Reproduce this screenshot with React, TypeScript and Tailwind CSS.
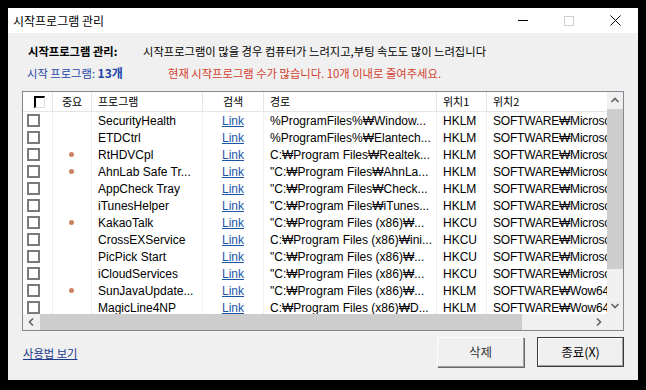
import React from "react";

const KR = { fontFamily: '"Noto Sans CJK KR", "Noto Sans", sans-serif' };
const TB = { fontFamily: '"Liberation Sans", "Noto Sans CJK KR", sans-serif' };

type Row = { name: string; dot: boolean; path: string; l1: string; l2: string };
const rows: Row[] = [
  { name: "SecurityHealth", dot: false, path: "%ProgramFiles%₩Window...", l1: "HKLM", l2: "SOFTWARE₩Microsoft₩Windows" },
  { name: "ETDCtrl", dot: false, path: "%ProgramFiles%₩Elantech...", l1: "HKLM", l2: "SOFTWARE₩Microsoft₩Windows" },
  { name: "RtHDVCpl", dot: true, path: "C:₩Program Files₩Realtek...", l1: "HKLM", l2: "SOFTWARE₩Microsoft₩Windows" },
  { name: "AhnLab Safe Tr...", dot: true, path: "\"C:₩Program Files₩AhnLa...", l1: "HKLM", l2: "SOFTWARE₩Microsoft₩Windows" },
  { name: "AppCheck Tray", dot: false, path: "\"C:₩Program Files₩Check...", l1: "HKLM", l2: "SOFTWARE₩Microsoft₩Windows" },
  { name: "iTunesHelper", dot: false, path: "\"C:₩Program Files₩iTunes...", l1: "HKLM", l2: "SOFTWARE₩Microsoft₩Windows" },
  { name: "KakaoTalk", dot: true, path: "\"C:₩Program Files (x86)₩...", l1: "HKCU", l2: "SOFTWARE₩Microsoft₩Windows" },
  { name: "CrossEXService", dot: false, path: "C:₩Program Files (x86)₩ini...", l1: "HKCU", l2: "SOFTWARE₩Microsoft₩Windows" },
  { name: "PicPick Start", dot: false, path: "\"C:₩Program Files (x86)₩...", l1: "HKCU", l2: "SOFTWARE₩Microsoft₩Windows" },
  { name: "iCloudServices", dot: false, path: "\"C:₩Program Files (x86)₩...", l1: "HKCU", l2: "SOFTWARE₩Microsoft₩Windows" },
  { name: "SunJavaUpdate...", dot: true, path: "\"C:₩Program Files (x86)₩...", l1: "HKLM", l2: "SOFTWARE₩Wow6432Node₩Microsoft" },
  { name: "MagicLine4NP", dot: false, path: "C:₩Program Files (x86)₩D...", l1: "HKLM", l2: "SOFTWARE₩Wow6432Node₩Microsoft" },
];

function Chevron({ dir }: { dir: "up" | "down" | "left" | "right" }) {
  const d =
    dir === "up"
      ? "M1.5 6 L5 2.5 L8.5 6"
      : dir === "down"
      ? "M1.5 3 L5 6.5 L8.5 3"
      : dir === "left"
      ? "M6 1.5 L2.5 5 L6 8.5"
      : "M3 1.5 L6.5 5 L3 8.5";
  return (
    <svg width="10" height="10" viewBox="0 0 10 10">
      <path d={d} fill="none" stroke="#606060" strokeWidth="1.6" />
    </svg>
  );
}

export default function App() {
  return (
    <div className="w-[646px] h-[390px] bg-black pt-[8px] pl-[8px] overflow-hidden">
      <div className="w-[630px] h-[372px] bg-[#f0f0f0] flex flex-col">
        {/* title bar */}
        <div className="h-[25px] bg-white flex items-center shrink-0">
          <span className="pl-[5px] text-[12px] text-black" style={KR}>
            시작프로그램 관리
          </span>
          <div className="ml-auto flex h-full">
            <div className="w-[46px] h-full flex items-center justify-center">
              <div className="w-[10px] h-px bg-black" />
            </div>
            <div className="w-[46px] h-full flex items-center justify-center">
              <div className="w-[10px] h-[10px] border border-[#cfcfcf]" />
            </div>
            <div className="w-[46px] h-full flex items-center justify-center">
              <svg width="11" height="11" viewBox="0 0 11 11">
                <path d="M0.5 0.5 L10.5 10.5 M10.5 0.5 L0.5 10.5" stroke="#000" strokeWidth="1" />
              </svg>
            </div>
          </div>
        </div>

        {/* body */}
        <div className="flex-1 px-[14px] flex flex-col">
          <div className="pt-[10px] flex flex-col text-[11.3px]" style={KR}>
            <div className="h-[16px] flex items-center">
              <span className="pl-[6px] w-[121px] font-bold text-black">시작프로그램 관리:</span>
              <span className="text-black">시작프로그램이 많을 경우 컴퓨터가 느려지고,부팅 속도도 많이 느려집니다</span>
            </div>
            <div className="h-[16px] mt-[6px] flex items-center">
              <span className="pl-[5px] w-[146px] text-[#1f45a8]">
                시작 프로그램: <span className="font-bold text-[12px]">13개</span>
              </span>
              <span className="text-[#d2402e]">현재 시작프로그램 수가 많습니다. 10개 이내로 줄여주세요.</span>
            </div>
          </div>

          {/* list view */}
          <div className="mt-[10px] h-[240px] border border-[#828790] bg-white flex flex-col shrink-0">
            <div className="flex h-[222px]">
              <div className="w-[584px] flex flex-col overflow-hidden">
                {/* header */}
                <div className="h-[20px] flex shrink-0 border-b border-[#e5e5e5] text-[11px] text-black" style={KR}>
                  <div className="w-[30px] shrink-0 border-r border-[#e5e5e5] flex items-center justify-center">
                    <div className="w-[11px] h-[12px] border-l-2 border-t-2 border-black border-r border-b border-r-[#e0e0e0] border-b-[#e0e0e0] ml-[3px]" />
                  </div>
                  <div className="w-[39px] shrink-0 border-r border-[#e5e5e5] flex items-center justify-center">중요</div>
                  <div className="w-[111px] shrink-0 border-r border-[#e5e5e5] flex items-center pl-[6px]">프로그램</div>
                  <div className="w-[61px] shrink-0 border-r border-[#e5e5e5] flex items-center justify-center">검색</div>
                  <div className="w-[173px] shrink-0 border-r border-[#e5e5e5] flex items-center pl-[6px]">경로</div>
                  <div className="w-[50px] shrink-0 border-r border-[#e5e5e5] flex items-center pl-[6px]">위치1</div>
                  <div className="w-[150px] shrink-0 border-r border-[#e5e5e5] flex items-center pl-[6px]">위치2</div>
                </div>
                {/* rows */}
                <div className="flex-1 overflow-hidden text-[12px] text-black" style={TB}>
                  {rows.map((r, i) => (
                    <div key={i} className="h-[17px] flex">
                      <div className="w-[30px] shrink-0 border-r border-[#f0f0f0] flex items-center pl-[4px]">
                        <div className="w-[13px] h-[13px] border-2 border-[#7a7a7a] bg-white" />
                      </div>
                      <div className="w-[39px] shrink-0 border-r border-[#f0f0f0] flex items-center justify-center">
                        {r.dot && <div className="w-[5px] h-[5px] rounded-full bg-[#c9825c] mr-[2px]" />}
                      </div>
                      <div className="w-[111px] shrink-0 border-r border-[#f0f0f0] flex items-center pl-[6px] whitespace-nowrap overflow-hidden">
                        {r.name}
                      </div>
                      <div className="w-[61px] shrink-0 border-r border-[#f0f0f0] flex items-center justify-center">
                        <span className="underline text-[#1a56a8]">Link</span>
                      </div>
                      <div className="w-[173px] shrink-0 border-r border-[#f0f0f0] flex items-center pl-[6px] whitespace-nowrap overflow-hidden">
                        {r.path}
                      </div>
                      <div className="w-[50px] shrink-0 border-r border-[#f0f0f0] flex items-center pl-[6px]">{r.l1}</div>
                      <div className="w-[150px] shrink-0 flex items-center pl-[6px] whitespace-nowrap overflow-hidden tracking-[-0.2px]">
                        {r.l2}
                      </div>
                    </div>
                  ))}
                </div>
              </div>
              {/* vertical scrollbar */}
              <div className="w-[16px] bg-[#f0f0f0] flex flex-col">
                <div className="h-[17px] flex items-center justify-center">
                  <Chevron dir="up" />
                </div>
                <div className="h-[160px] bg-[#cdcdcd]" />
                <div className="flex-1" />
                <div className="h-[17px] flex items-center justify-center">
                  <Chevron dir="down" />
                </div>
              </div>
            </div>
            {/* horizontal scrollbar */}
            <div className="h-[16px] flex bg-[#f0f0f0]">
              <div className="w-[17px] flex items-center justify-center">
                <Chevron dir="left" />
              </div>
              <div className="w-[482px] bg-[#cdcdcd]" />
              <div className="flex-1" />
              <div className="w-[17px] flex items-center justify-center">
                <Chevron dir="right" />
              </div>
              <div className="w-[16px] bg-[#f0f0f0]" />
            </div>
          </div>

          {/* bottom */}
          <div className="mt-[6px] h-[30px] flex items-center" style={KR}>
            <span className="pl-[1px] pt-[3px] text-[11.3px] text-[#1b3a8c] underline">사용법 보기</span>
            <div className="ml-auto flex gap-[13px]">
              <div className="w-[87px] h-[30px] bg-[#f0f0f0] border border-t-white border-l-white border-r-[#a0a0a0] border-b-[#a0a0a0] shadow-[1px_1px_0_#696969] flex items-center justify-center text-[12.5px] text-[#333]">
                삭제
              </div>
              <div className="w-[87px] h-[30px] bg-[#f0f0f0] border border-[#3c3c3c] flex items-center justify-center text-[12.5px] text-black">
                <div className="w-full h-full border border-t-white border-l-white border-r-[#a0a0a0] border-b-[#a0a0a0] flex items-center justify-center">
                  종료(X)
                </div>
              </div>
            </div>
          </div>
        </div>
      </div>
    </div>
  );
}
